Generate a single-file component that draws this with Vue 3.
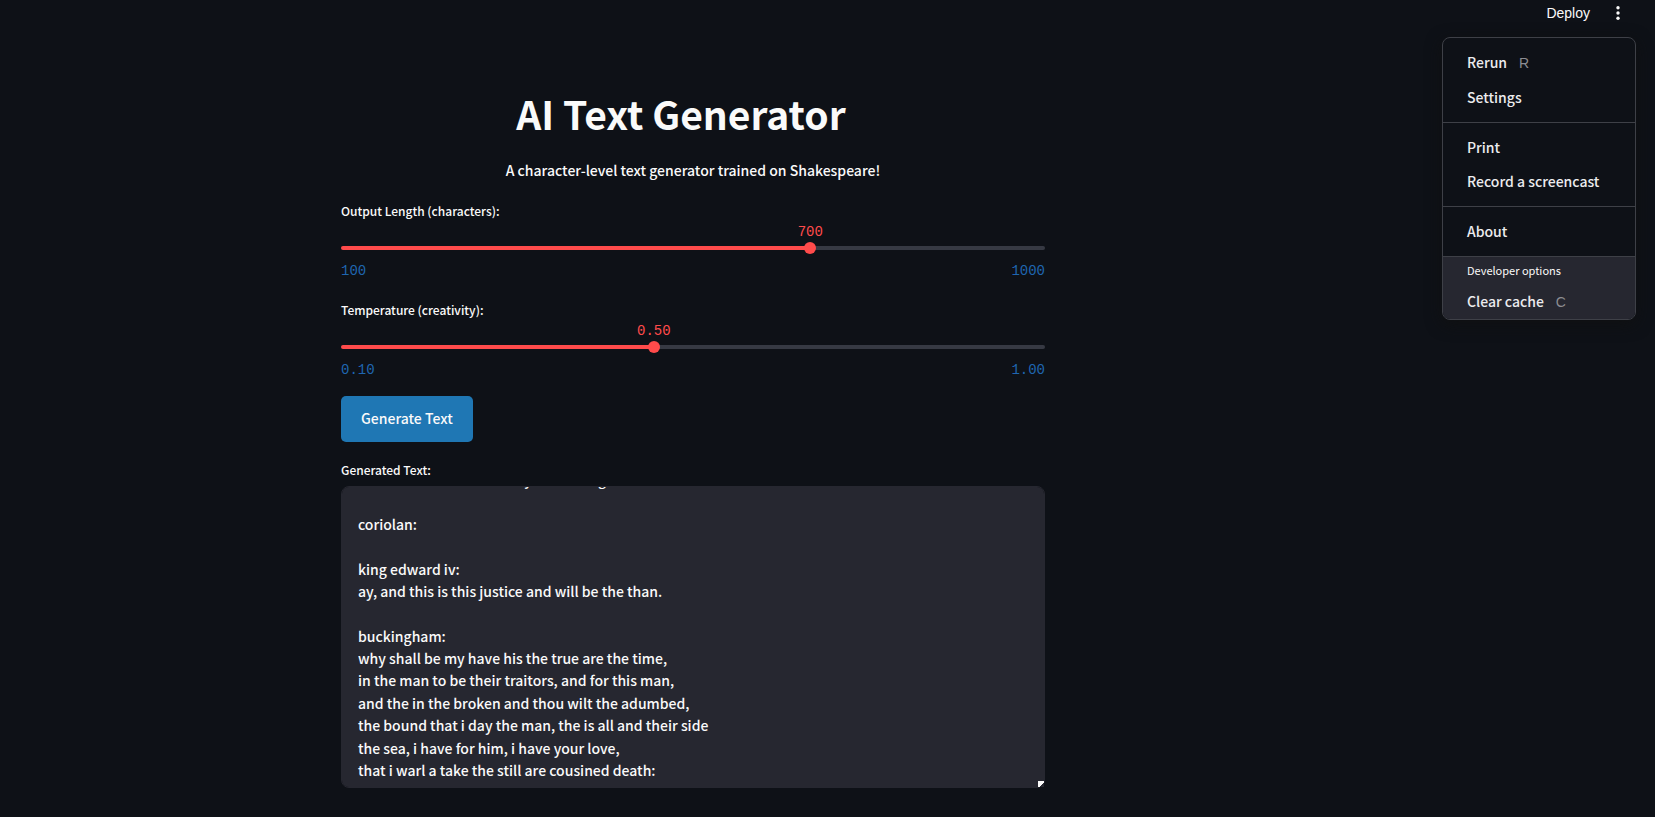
<script setup>
import { ref, onMounted, nextTick } from 'vue'

const sliders = ref([
  { id: 'length', label: 'Output Length (characters):', min: 100, max: 1000, step: 10, value: 700, digits: 0 },
  { id: 'temperature', label: 'Temperature (creativity):', min: 0.1, max: 1, step: 0.05, value: 0.5, digits: 2 }
])

const share = (s) => ((s.value - s.min) / (s.max - s.min)) * 100 + '%'

const menu = [
  [{ name: 'Rerun', key: 'R' }, { name: 'Settings' }],
  [{ name: 'Print' }, { name: 'Record a screencast' }],
  [{ name: 'About' }]
]

const output = ref(`king richard iii:
and this is the man that i have the world,
and the lord of the son of the state.

gloucester:
in the man to be theirs my lord o king

coriolan:

king edward iv:
ay, and this is this justice and will be the than.

buckingham:
why shall be my have his the true are the time,
in the man to be their traitors, and for this man,
and the in the broken and thou wilt the adumbed,
the bound that i day the man, the is all and their side
the sea, i have for him, i have your love,
that i warl a take the still are cousined death:
`)

const box = ref(null)
onMounted(async () => {
  await nextTick()
  box.value.scrollTop = 147
})
</script>

<template>
  <div class="app">
    <header class="toolbar">
      <button class="deploy" type="button">Deploy</button>
      <button class="kebab" type="button" aria-label="Main menu">
        <svg width="16" height="16" viewBox="0 0 16 16" fill="currentColor">
          <circle cx="8" cy="2.8" r="1.7" />
          <circle cx="8" cy="8" r="1.7" />
          <circle cx="8" cy="13.2" r="1.7" />
        </svg>
      </button>
      <nav class="menu" aria-label="Main menu">
        <ul v-for="(group, i) in menu" :key="i" class="group">
          <li v-for="item in group" :key="item.name">
            <button class="item" type="button">{{ item.name }}<kbd v-if="item.key">{{ item.key }}</kbd></button>
          </li>
        </ul>
        <div class="group dev">
          <p class="dev-title">Developer options</p>
          <button class="item" type="button">Clear cache<kbd>C</kbd></button>
        </div>
      </nav>
    </header>

    <main class="main">
      <div class="block">
        <h1>AI Text Generator</h1>
        <p class="lead">A character-level text generator trained on Shakespeare!</p>

        <div v-for="s in sliders" :key="s.id" class="slider">
          <label :for="s.id">{{ s.label }}</label>
          <div class="rail" :style="{ '--share': share(s) }">
            <output :for="s.id">{{ s.value.toFixed(s.digits) }}</output>
            <input :id="s.id" v-model.number="s.value" type="range" :min="s.min" :max="s.max" :step="s.step" />
          </div>
          <div class="bounds">
            <span>{{ s.min.toFixed(s.digits) }}</span>
            <span>{{ s.max.toFixed(s.digits) }}</span>
          </div>
        </div>

        <button class="generate" type="button">Generate Text</button>

        <label class="area-label" for="generated">Generated Text:</label>
        <textarea id="generated" ref="box" v-model="output" spellcheck="false"></textarea>
      </div>
    </main>
  </div>
</template>

<style>
body {
  background: #0e1117;
}
</style>

<style scoped>
.app {
  min-height: 100vh;
  box-sizing: border-box;
  background: #0e1117;
  color: #fafafa;
  font-family: "Noto Sans CJK SC", "Noto Sans", sans-serif;
  font-size: 14px;
  font-weight: 500;
}

button {
  padding: 0;
  border: 0;
  background: none;
  color: inherit;
  font: inherit;
  cursor: pointer;
}

.toolbar {
  position: relative;
  display: flex;
  justify-content: flex-end;
  align-items: center;
  gap: 20px;
  height: 26px;
  padding-right: 29px;
}

.deploy {
  font-family: "Liberation Sans", Arial, sans-serif;
  font-weight: 400;
}

.kebab {
  display: flex;
}

.menu {
  position: absolute;
  top: 37px;
  right: 19px;
  width: 192px;
  border: 1px solid #3e4047;
  border-radius: 8px;
  overflow: hidden;
  background: #0e1117;
  box-shadow: 0 4px 16px rgba(16, 16, 16, 0.8);
}

.group {
  margin: 0;
  padding: 7px 0 8px;
  list-style: none;
}

.group + .group {
  border-top: 1px solid #3e4047;
}

.item {
  display: block;
  width: 100%;
  padding: 0 24px;
  color: #ececee;
  line-height: 34px;
  text-align: left;
}

kbd {
  margin-left: 12px;
  color: #8c8d92;
  font-family: "Liberation Sans", Arial, sans-serif;
  font-weight: 400;
}

.group.dev {
  padding: 2px 0 0;
  background: #262730;
}

.dev-title {
  margin: 0 0 3px;
  padding: 0 24px;
  font-size: 11px;
  font-weight: 400;
  line-height: 22px;
}

.main {
  padding: 54px 269px 29px 0;
}

.block {
  display: flex;
  flex-direction: column;
  align-items: stretch;
  max-width: 704px;
  margin: 0 auto;
}

h1 {
  margin: 0;
  padding: 5px 24px 11px 0;
  font-size: 39px;
  font-weight: 700;
  line-height: 56px;
  text-align: center;
}

.lead {
  margin: 0 0 10px;
  line-height: 36px;
  text-align: center;
}

.slider {
  margin-bottom: 11px;
}

label {
  display: block;
  font-size: 12px;
  line-height: 26px;
}

.rail {
  position: relative;
  height: 4px;
  margin-top: 22px;
  border-radius: 2px;
  background: linear-gradient(to right, #ff4b4b var(--share), #363943 var(--share));
}

.rail output {
  position: absolute;
  bottom: 10px;
  left: var(--share);
  transform: translateX(-50%);
  color: #ff4b4b;
  font-family: "Liberation Mono", monospace;
  font-weight: 400;
  line-height: 16px;
}

.rail input {
  position: absolute;
  top: -4px;
  left: -6px;
  width: calc(100% + 12px);
  height: 12px;
  margin: 0;
  appearance: none;
  background: none;
}

.rail input::-webkit-slider-thumb {
  width: 12px;
  height: 12px;
  border-radius: 50%;
  appearance: none;
  background: #ff4b4b;
}

.bounds {
  display: flex;
  justify-content: space-between;
  padding-top: 13px;
  padding-bottom: 7px;
  color: #1f66b0;
  font-family: "Liberation Mono", monospace;
  font-weight: 400;
  line-height: 16px;
}

.generate {
  align-self: flex-start;
  margin-bottom: 16px;
  padding: 0 20px 2px;
  border-radius: 5px;
  background: #1f77b4;
  line-height: 44px;
}

.area-label {
  margin-bottom: 4px;
  line-height: 24px;
}

textarea {
  box-sizing: border-box;
  width: 100%;
  height: 302px;
  padding: 16px;
  border: 1px solid #262730;
  border-radius: 8px;
  outline: 0;
  background: #262730;
  color: inherit;
  font: inherit;
  line-height: 1.6;
  resize: vertical;
}

textarea::-webkit-scrollbar {
  width: 6px;
  height: 6px;
  background: transparent;
}

textarea::-webkit-resizer {
  background: linear-gradient(135deg, #fafafa 60%, #262730 60%) right bottom / 6px 6px no-repeat;
}
</style>
